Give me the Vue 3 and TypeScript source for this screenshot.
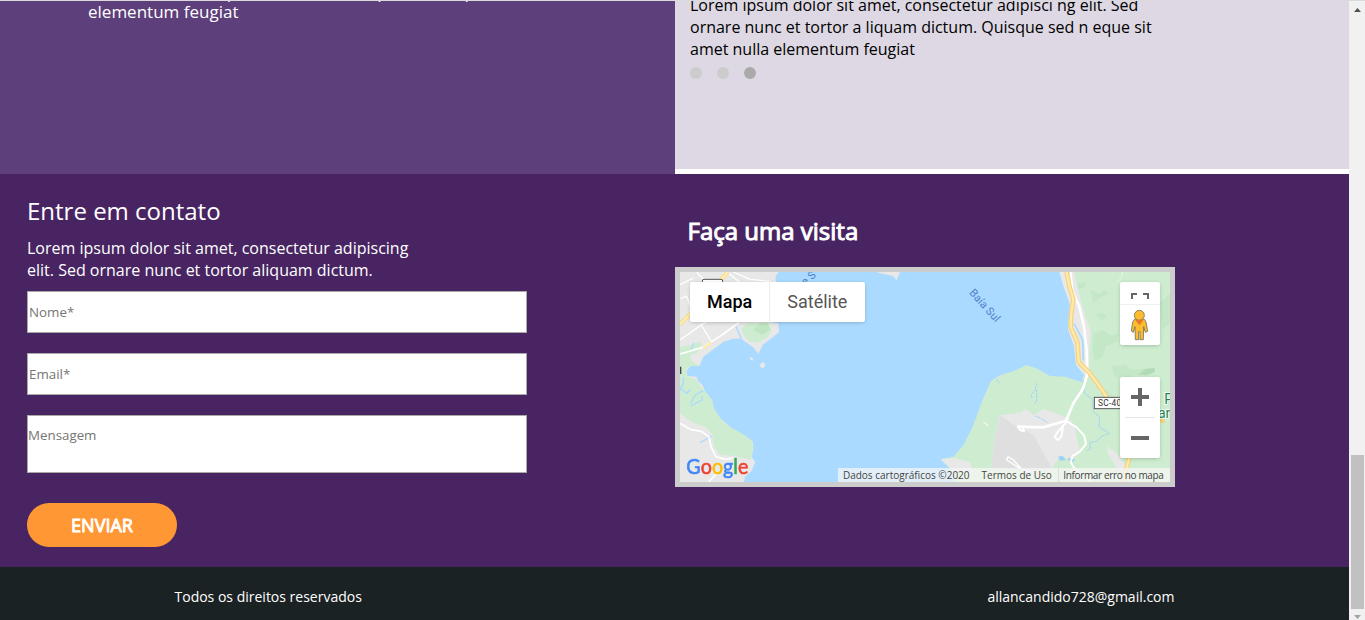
<script setup lang="ts">
import { ref } from 'vue'

const active = ref(2)
const nome = ref('')
const email = ref('')
const mensagem = ref('')
</script>

<template>
  <div class="window">
    <main class="page">
      <section class="about">
        <div class="about-left">
          <p>nunc et tortor aliquam dictum. Quisque sed neque sit amet nulla<br />elementum feugiat</p>
        </div>
        <div class="about-right">
          <p>Lorem ipsum dolor sit amet, consectetur adipisci ng elit. Sed<br />ornare nunc et tortor a liquam dictum. Quisque sed n eque sit<br />amet nulla elementum feugiat</p>
          <div class="dots">
            <span v-for="i in 3" :key="i" class="dot" :class="{ on: active === i - 1 }" @click="active = i - 1"></span>
          </div>
        </div>
      </section>

      <section class="contact">
        <form class="form" @submit.prevent>
          <h2>Entre em contato</h2>
          <p>Lorem ipsum dolor sit amet, consectetur adipiscing<br />elit. Sed ornare nunc et tortor aliquam dictum.</p>
          <input v-model="nome" type="text" placeholder="Nome*" />
          <input v-model="email" type="text" placeholder="Email*" />
          <textarea v-model="mensagem" placeholder="Mensagem"></textarea>
          <button type="submit">ENVIAR</button>
        </form>

        <div class="visit">
          <h2>Faça uma visita</h2>
          <div class="map">
            <svg class="tiles" viewBox="30 36 1470 630" width="490" height="210">
              <rect x="30" y="36" width="1470" height="630" fill="#aadaff" />
              <!-- western shore -->
              <path fill="#e8e8e8" d="M30 36H326L316 50L318 66L300 186L325 190L327 216L310 230L292 244L278 254L265 282L250 262L232 250L214 236L205 225L212 236L190 236L160 246L130 268L100 290L88 318L62 318L50 332L52 348L80 350L84 364L98 376L105 394L126 420L132 446L150 474L184 504L214 520L248 544L250 570L244 590L256 606L244 634L225 650L222 666H30Z" />
              <path fill="#ceedd0" d="M215 206L232 190H298L304 208L294 232L262 248L235 244L220 222Z" />
              <path fill="#bfe5c1" d="M250 210L272 188H292L300 210L276 224Z" />
              <path fill="#ceedd0" d="M30 262L60 254L92 246L96 262L80 280L60 286L66 304L88 318L62 318L48 330L52 350L78 358L90 378L104 394L126 420L132 446L150 474L184 504L214 520L246 544L250 566L242 600L196 588L150 584L132 560L126 520L104 500L64 486L30 460Z" />
              <path fill="none" stroke="#aadaff" stroke-width="4" d="M196 194L214 236M64 268L72 248M32 386L50 400L62 388M62 430L76 404L100 392M90 548L126 528M40 352V370L30 390M62 438L96 420V408" />
              <path fill="#e8e8e8" d="M238 290L248 294L250 302L242 300ZM272 310L281 306L286 318L277 326L270 318ZM618 36H690L680 60L668 48L640 42Z" />
              <g fill="none" stroke="#fff" stroke-linejoin="round">
                <path stroke-width="4" d="M30 240L92 196L136 168M92 192L124 244M30 116L50 108L62 140M30 74L70 54M80 36L112 70M172 36L212 70M190 36L240 58L300 64" />
                <path stroke-width="5" d="M30 282L98 262L160 222L206 188M30 490L60 508L94 514L116 530L124 562L138 590L166 598L188 594M116 666L140 640" />
              </g>
              <path fill="none" stroke="#f6d883" stroke-width="12" d="M30 194L62 160M142 70L174 36" />
              <path fill="none" stroke="#ffebac" stroke-width="8" d="M30 194L62 160M142 70L174 36M100 264L124 248" />
              <rect x="97" y="58" width="61" height="30" rx="5" fill="#fff" stroke="#555" stroke-width="3" />
              <path fill="#444" d="M30 320h4v22h-4z" />
              <!-- eastern shore -->
              <g transform="translate(750 0)">
                <path fill="#ceedd0" d="M418 36H750V666H104L90 626L62 598L100 590L130 556L158 500L184 430L212 364L240 346L280 334L320 315L352 326L390 348L436 350L484 366L492 344L468 310L466 260L444 200L450 130L434 70Z" />
                <path fill="#e8e8e8" d="M418 36H462L478 104L496 170L512 210L506 330L498 350L468 316L462 258L444 208L450 134L430 78ZM62 598L100 594L150 606L160 636H112L90 624ZM240 466L300 458L316 446L340 466L372 448L410 460L450 478L464 500L480 580L456 596L420 592L390 630H214L222 540ZM560 558L590 580L632 636L614 660L588 620L564 582Z" />
                <path fill="#dfdfdf" d="M242 466L274 490L340 524L394 620L380 630H214L222 540Z" />
                <path fill="#bfe5c1" d="M474 70L500 66L492 84L474 86ZM512 90L540 102L552 88L566 102L540 112L520 130ZM520 220L548 210L570 226L596 222L590 246L560 258L548 290L526 304L518 270ZM576 318L614 314L640 330L690 322L704 334L680 348L640 344L610 364L584 350ZM720 130L750 100V190L728 210ZM526 164L550 158L560 174L544 180ZM540 402L560 390L580 410Z" opacity=".65" />
                <path fill="#b0dbb4" d="M654 344L676 328L704 324L704 336L684 344Z" />
                <path fill="none" stroke="#e8f4e9" stroke-width="3" d="M606 36V50L592 66" />
                <path fill="none" stroke="#aadaff" stroke-width="5" d="M462 190L488 240L490 302" />
                <path fill="none" stroke="#9fd1f6" stroke-width="3" stroke-dasharray="7 2" d="M488 360L494 400L516 416L520 456L540 470L536 500L568 520L544 530L528 544L508 548L512 566L500 574M350 370L346 390L334 404L336 414M350 390V424L344 430M346 468L360 474L382 488M230 358L240 370" />
                <path fill="#9fd1f6" d="M414 590L428 588L438 600L420 602ZM444 594L466 598L458 606L446 604Z" />
                <g fill="none" stroke="#fff" stroke-linejoin="round" stroke-linecap="round">
                  <path stroke-width="8" d="M456 92L478 140L492 200L500 270L502 344L488 388L460 430L438 482L370 502L294 500" />
                  <path stroke-width="6" d="M440 484L470 502L492 526L498 552L480 574L458 588L452 606L462 624L494 652L514 664M440 484L410 520L404 532L414 540L424 530L430 496M294 500L300 510L312 514L308 502M452 36L458 92" />
                  <path stroke-width="4" d="M330 636L300 626L270 606L260 600L264 590L280 600L302 624" />
                </g>
                <path fill="none" stroke="#f4d183" stroke-width="14" stroke-linejoin="round" d="M440 36L448 78L460 118L454 160L452 202L472 246L476 306L508 338L548 392L562 416M628 594L608 666M718 482H734" />
                <path fill="none" stroke="#ffeba7" stroke-width="7" stroke-linejoin="round" d="M440 36L448 78L460 118L454 160L452 202L472 246L476 306L508 338L548 392L562 416M628 594L608 666" />
                <path stroke="#f5f5ed" stroke-width="4" d="M190 486L206 498" />
                <rect x="523" y="412" width="110" height="34" fill="#fff" stroke="#555" stroke-width="3" />
                <text class="road" x="534" y="438" textLength="84">SC-405</text>
                <text class="park" x="733" y="431">P</text>
                <text class="park" x="714" y="475">ar</text>
                <text class="bay" transform="translate(146 99) rotate(48)" textLength="120">Baía Sul</text>
              </g>
              <text class="bay" transform="translate(406 78) rotate(-42)">e S</text>
              <text class="logo" x="49" y="643" textLength="186" lengthAdjust="spacingAndGlyphs"><tspan fill="#4285f4" stroke="#4285f4">G</tspan><tspan fill="#ea4335" stroke="#ea4335">o</tspan><tspan fill="#fbbc05" stroke="#fbbc05">o</tspan><tspan fill="#4285f4" stroke="#4285f4">g</tspan><tspan fill="#34a853" stroke="#34a853">l</tspan><tspan fill="#ea4335" stroke="#ea4335">e</tspan></text>
            </svg>
            <div class="types"><span class="sel">Mapa</span><span>Satélite</span></div>
            <div class="tools top">
              <svg width="40" height="63" viewBox="0 0 120 189">
                <path fill="none" stroke="#666" stroke-width="6" d="M36 51V36H51M69 36H84V51" />
                <path stroke="#f0f0f0" stroke-width="3" d="M0 67.500H120" />
                <g fill="#fbbc2d" stroke="#77705f" stroke-width="2.5" stroke-linejoin="round">
                  <path d="M44 111H72L78 120L83 148L76 151L71 134L70 173H60V149H56V173H46L45 134L40 151L34 147L38 120Z" />
                  <circle cx="58" cy="100" r="15" />
                </g>
                <path fill="#e5792e" d="M46 113H70L64 123L58 129L52 122Z" />
              </svg>
            </div>
            <div class="tools zoom">
              <svg width="40" height="81" viewBox="0 0 120 243">
                <path fill="none" stroke="#666" stroke-width="12" d="M33 60H87M60 33V87M33 183H87" />
                <path stroke="#e6e6e6" stroke-width="3" d="M15 121.500H105" />
              </svg>
            </div>
            <div class="legal"><span>Dados cartográficos ©2020</span><span>Termos de Uso</span><span>Informar erro no mapa</span></div>
          </div>
        </div>
      </section>

      <footer>
        <span>Todos os direitos reservados</span>
        <span>allancandido728@gmail.com</span>
      </footer>
    </main>
    <aside class="scrollbar">
      <svg width="16" height="10" viewBox="0 0 16 10"><path fill="#505050" d="M5 10L8.500 6L12 10Z" /></svg>
      <i class="thumb"></i>
      <svg width="16" height="11" viewBox="0 0 16 11"><path fill="#a3a3a3" d="M5 6L8.500 10L12 6Z" /></svg>
    </aside>
    <div class="edge"></div>
  </div>
</template>

<style>
body {
  margin: 0;
  overflow: hidden;
}
</style>

<style scoped>
.window {
  position: relative;
  display: flex;
  width: 1365px;
  height: 620px;
  overflow: hidden;
  font-family: 'Open Sans', sans-serif;
  font-size: 16px;
  line-height: 22px;
}
.edge {
  position: absolute;
  inset: 0 0 auto;
  height: 1px;
  background: #d9d9de;
}
.page {
  width: 1349px;
}
p,
h2 {
  margin: 0;
  font-weight: 400;
  white-space: nowrap;
}
.about {
  display: flex;
  align-items: flex-start;
  height: 174px;
  background: #fff;
}
.about-left {
  width: 675px;
  height: 174px;
  overflow: hidden;
  background: #5d3f7c;
  color: #fff;
}
.about-left p {
  margin: -18px 0 0 88px;
  font-size: 17px;
  line-height: 20px;
}
.about-right {
  box-sizing: border-box;
  width: 674px;
  height: 169px;
  overflow: hidden;
  padding-left: 15px;
  background: #ddd8e3;
  color: #000;
}
.about-right p {
  margin-top: -6px;
}
.dots {
  display: flex;
  gap: 15px;
  margin-top: 7px;
}
.dot {
  width: 12px;
  height: 12px;
  border-radius: 50%;
  background: #ccc;
}
.dot.on {
  background: #aaa;
}
.contact {
  display: flex;
  height: 393px;
  background: #482562;
  color: #fff;
}
.form {
  box-sizing: border-box;
  display: flex;
  flex-direction: column;
  align-items: flex-start;
  width: 675px;
  padding: 20px 0 0 27px;
}
h2 {
  font-size: 24px;
  line-height: 33px;
}
.form p {
  margin: 10px 0;
}
input,
textarea {
  box-sizing: border-box;
  width: 500px;
  height: 42px;
  margin: 0 0 20px;
  padding: 1px;
  border: 1px solid #a9a9a9;
  border-radius: 0;
  background: #fff;
  font-family: 'Open Sans', sans-serif;
  font-size: 13.333px;
  outline: none;
}
textarea {
  height: 58px;
  margin-bottom: 30px;
  padding: 10px 0 0;
  line-height: 18px;
  resize: none;
  overflow: hidden;
}
::placeholder {
  color: #757575;
}
button {
  width: 150px;
  height: 44px;
  padding: 0;
  border: 0;
  border-radius: 22px;
  background: #ff9735;
  color: #fff;
  font-family: 'Open Sans', sans-serif;
  font-size: 18px;
  -webkit-text-stroke: 0.9px #fff;
}
.visit {
  padding-top: 40px;
}
.visit h2 {
  padding-left: 12.5px;
  -webkit-text-stroke: 1px #fff;
}
.map {
  position: relative;
  width: 490px;
  height: 210px;
  margin-top: 20px;
  border: 5px solid #ccc;
  overflow: hidden;
}
.tiles {
  display: block;
}
.road {
  font: 25px Roboto, sans-serif;
  fill: #333;
}
.park {
  font: 42px Roboto, sans-serif;
  fill: #1f8348;
  stroke: #fff;
  stroke-width: 5px;
  paint-order: stroke;
}
.bay {
  font: 33px Roboto, sans-serif;
  fill: #4f7fcc;
}
.logo {
  font: 66px Lato, sans-serif;
  stroke-width: 2px;
  filter: drop-shadow(0 0 2px #fff);
}
.types {
  position: absolute;
  top: 10px;
  left: 10px;
  display: flex;
  height: 40px;
  border-radius: 2px;
  background: #fff;
  box-shadow: 0 1px 4px -1px rgba(0, 0, 0, 0.3);
  color: #565656;
  font: 18px/40px Roboto, sans-serif;
}
.types span {
  padding: 0 18px 0 17px;
}
.types .sel {
  padding-right: 17px;
  border-right: 1px solid #ececec;
  color: #000;
  font-weight: 500;
}
.tools {
  position: absolute;
  right: 10px;
  width: 40px;
  border-radius: 2px;
  background: #fff;
  box-shadow: 0 1px 4px -1px rgba(0, 0, 0, 0.3);
}
.tools svg {
  display: block;
}
.top {
  top: 10px;
}
.zoom {
  top: 105px;
}
.legal {
  position: absolute;
  right: 0;
  bottom: 0;
  display: flex;
  height: 14px;
  color: #444;
  font-size: 10px;
  line-height: 14px;
  white-space: nowrap;
}
.legal span {
  padding: 0 6px 0 5px;
  background: rgba(245, 245, 245, 0.75);
}
.legal span + span {
  padding-left: 6px;
}
.legal span:last-child {
  padding-left: 4.5px;
  padding-right: 6.5px;
  border-left: 1px solid #ddd;
  letter-spacing: -0.35px;
}
footer {
  box-sizing: border-box;
  display: flex;
  justify-content: space-between;
  height: 53px;
  padding: 20px 174.5px 0;
  background: #1b2223;
  color: #fff;
  font-size: 14px;
  line-height: 19px;
}
.scrollbar {
  box-sizing: border-box;
  display: flex;
  flex-direction: column;
  width: 16px;
  padding-top: 2px;
  background: #f1f1f1;
}
.thumb {
  width: 13px;
  height: 154px;
  margin: auto 0 0 2px;
  background: #c1c1c1;
}
</style>
